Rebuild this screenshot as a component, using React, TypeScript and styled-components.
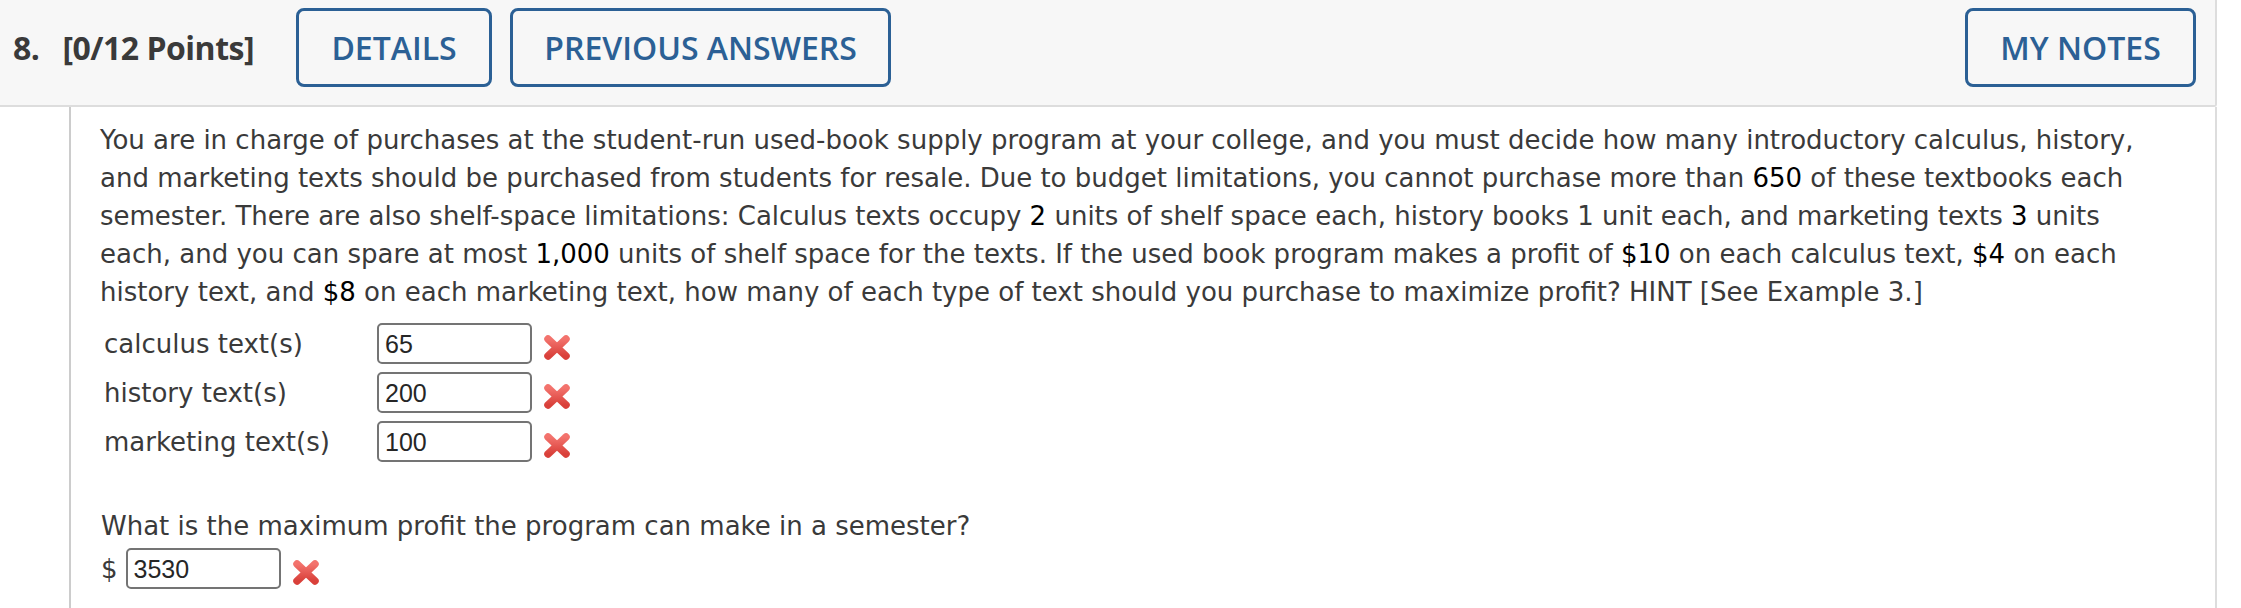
import React from "react";
import styled, { createGlobalStyle } from "styled-components";

const Global = createGlobalStyle`
  html, body { margin: 0; padding: 0; background: #ffffff; }
  body { width: 2241px; height: 608px; overflow: hidden; }
`;

const Page = styled.div`
  width: 2217px;
  height: 608px;
  display: flex;
  flex-direction: column;
`;

const Header = styled.div`
  box-sizing: border-box;
  height: 107px;
  display: flex;
  align-items: center;
  padding: 8px 19px 18px 13px;
  background: #f7f7f7;
  border-bottom: 2px solid #dddddd;
  border-right: 2px solid #dddddd;
  border-bottom-right-radius: 3px;
  font-family: "Open Sans", sans-serif;
`;

const Title = styled.div`
  display: flex;
  align-items: baseline;
  gap: 23px;
  margin-right: 42px;
  font-size: 32px;
  font-weight: 700;
  color: #3a3a3a;
  letter-spacing: -0.5px;
`;

const HeaderButton = styled.button<{ $w: number }>`
  box-sizing: border-box;
  width: ${(p) => p.$w}px;
  height: 79px;
  margin-right: 18px;
  background: transparent;
  border: 3px solid #2b6095;
  border-radius: 8px;
  color: #2b6095;
  font-family: "Open Sans", sans-serif;
  font-size: 32px;
  font-weight: 600;
  padding: 0;
  &:last-child { margin-right: 0; }
`;

const Spacer = styled.div`
  flex: 1;
`;

const Body = styled.div`
  flex: 1;
  margin-left: 69px;
  border-left: 2px solid #cccccc;
  border-right: 2px solid #dddddd;
  padding: 14px 60px 0 29px;
  font-family: "DejaVu Sans", Verdana, sans-serif;
  font-size: 26px;
  line-height: 38px;
  color: #3a3a3a;
`;

const Question = styled.p`
  margin: 0;
`;

const Num = styled.span`
  color: #000000;
`;

const AnswerGrid = styled.div`
  display: grid;
  grid-template-columns: 273px auto 1fr;
  grid-auto-rows: 49px;
  align-items: center;
  margin: 8px 0 0 4px;
`;

const Label = styled.div`
  line-height: 38px;
`;

const Field = styled.div`
  box-sizing: border-box;
  width: 155px;
  height: 41px;
  border: 2px solid #747474;
  border-radius: 5px;
  background: #fff;
  padding: 0 6px;
  display: flex;
  align-items: center;
  font-family: "Liberation Sans", Arial, sans-serif;
  font-size: 25px;
  color: #262626;
`;

const Wrong = styled.svg`
  width: 28px;
  height: 27px;
  margin: 7px 0 0 11px;
  display: block;
`;

const Prompt = styled.p`
  margin: 41px 0 0 1px;
`;

const DollarRow = styled.div`
  height: 47px;
  display: flex;
  align-items: center;
  margin-left: 1px;
`;

const Dollar = styled.span`
  margin-right: 8px;
`;

let gid = 0;
function WrongMark() {
  const id = React.useMemo(() => `xg${gid++}`, []);
  return (
    <Wrong viewBox="0 0 28 27">
      <defs>
        <linearGradient id={id} x1="0" y1="0" x2="0" y2="1">
          <stop offset="0" stopColor="#f3736d" />
          <stop offset="1" stopColor="#d9403a" />
        </linearGradient>
      </defs>
      <g stroke={`url(#${id})`} strokeWidth="7.5" strokeLinecap="round">
        <line x1="5" y1="5" x2="23" y2="22" />
        <line x1="23" y1="5" x2="5" y2="22" />
      </g>
    </Wrong>
  );
}

const rows = [
  { label: "calculus text(s)", value: "65" },
  { label: "history text(s)", value: "200" },
  { label: "marketing text(s)", value: "100" },
];

export default function App() {
  return (
    <>
      <Global />
      <Page>
        <Header>
          <Title>
            <span>8.</span>
            <span>[0/12 Points]</span>
          </Title>
          <HeaderButton $w={196}>DETAILS</HeaderButton>
          <HeaderButton $w={381}>PREVIOUS ANSWERS</HeaderButton>
          <Spacer />
          <HeaderButton $w={231}>MY NOTES</HeaderButton>
        </Header>
        <Body>
          <Question>
            You are in charge of purchases at the student-run used-book supply program at your college, and you must
            decide how many introductory calculus, history, and marketing texts should be purchased from students for
            resale. Due to budget limitations, you cannot purchase more than <Num>650</Num> of these textbooks each
            semester. There are also shelf-space limitations: Calculus texts occupy <Num>2</Num> units of shelf space
            each, history books 1 unit each, and marketing texts <Num>3</Num> units each, and you can spare at most{" "}
            <Num>1,000</Num> units of shelf space for the texts. If the used book program makes a profit of{" "}
            <Num>$10</Num> on each calculus text, <Num>$4</Num> on each history text, and <Num>$8</Num> on each
            marketing text, how many of each type of text should you purchase to maximize profit? HINT [See Example 3.]
          </Question>
          <AnswerGrid>
            {rows.map((r) => (
              <React.Fragment key={r.label}>
                <Label>{r.label}</Label>
                <Field>{r.value}</Field>
                <WrongMark />
              </React.Fragment>
            ))}
          </AnswerGrid>
          <Prompt>What is the maximum profit the program can make in a semester?</Prompt>
          <DollarRow>
            <Dollar>$</Dollar>
            <Field>3530</Field>
            <WrongMark />
          </DollarRow>
        </Body>
      </Page>
    </>
  );
}
